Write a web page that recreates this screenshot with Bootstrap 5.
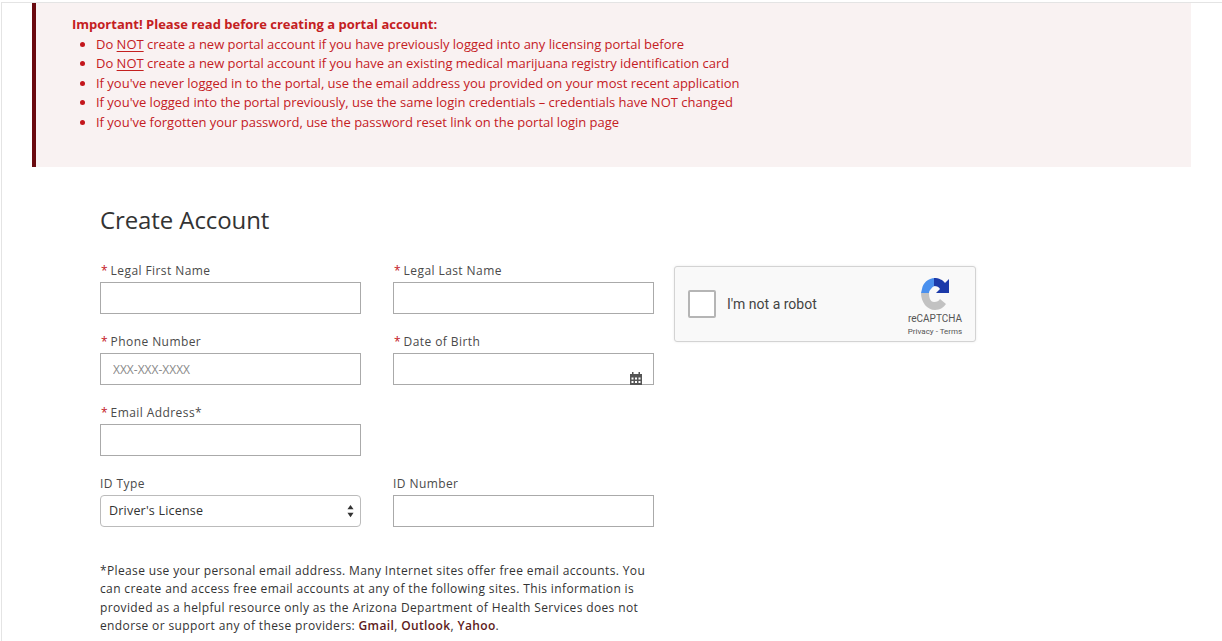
<!DOCTYPE html>
<html lang="en">
<head>
<meta charset="utf-8">
<title>Create Account</title>
<link href="https://cdn.jsdelivr.net/npm/bootstrap@5.3.0/dist/css/bootstrap.min.css" rel="stylesheet">
<style>
html,body{height:641px;overflow:hidden;background:#fff}
body{font-family:"Open Sans","Liberation Sans",sans-serif;font-size:13px;color:#333}
.page-frame{border-left:1px solid #e4e4e4;border-top:1px solid #e4e4e4;margin:2px 0 0 1px;height:639px;padding:0 30px}
.notice{background:#f9f2f2;border-left:4px solid #6a0a0f;color:#c4201f;height:164px;padding:12px 36px 0;width:1159px;line-height:19.6px;font-size:13px}
.notice ul{margin:0;padding-left:24px;letter-spacing:-.01px}
.notice li::marker{color:#c4161c}
.notice strong{font-weight:700}
.notice u{text-underline-offset:2px}
.form-area{padding:37px 0 0 68px}
.form-title{font-size:24px;font-weight:400;color:#333;line-height:32px;margin:0 0 27px;letter-spacing:-.1px}
.fields{display:grid;grid-template-columns:261px 261px 302px;column-gap:32px;row-gap:20px;width:900px}
.cap-cell{grid-column:3;grid-row:1 / span 2;margin-left:-12px;margin-top:3px}
.col-start{grid-column:1}
.lbl{display:block;font-size:12px;line-height:16px;margin-bottom:3px;color:#4a4a4a;letter-spacing:.42px;height:16px}
.req{color:#c4161c;margin:0 3px 0 1px;letter-spacing:0}
.fld{height:32px;border:1px solid #aaa;border-radius:0;padding:1px 12px 0;font-size:12px;color:#333;box-shadow:none}
.fld::placeholder{color:#8a8a8a;opacity:1}
.date-wrap{position:relative}
.cal-ico{position:absolute;right:12px;bottom:0;width:12px;height:13px}
.sel-wrap{position:relative}
.id-select{height:32px;border:1px solid #bbb;border-radius:4px;padding:0 8px;font-size:12.5px;letter-spacing:.2px;color:#333;background-image:none;box-shadow:none;appearance:none}
.sel-arrows{position:absolute;right:7px;top:8px;width:7px;height:16px}
.captcha{width:302px;height:76px;background:#f9f9f9;border:1px solid #d3d3d3;border-radius:3px;box-shadow:0 0 3px rgba(0,0,0,.08);padding:0 11px 0 13px}
.cap-box{width:28px;height:28px;border:2px solid #b5b5b5;border-radius:2px;background:#fff;margin-right:11px}
.cap-text{font-family:Roboto,"Liberation Sans",sans-serif;font-size:14px;color:#444}
.cap-brand{font-family:Roboto,"Liberation Sans",sans-serif;width:58px;text-align:center;color:#555;padding-top:10px}
.cap-brand svg{display:block;margin:0 auto 2px;width:32px;height:34px}
.cap-name{font-size:10px;line-height:12px;white-space:nowrap}
.cap-links{font-size:8px;line-height:13px;white-space:nowrap}
.fine{width:556px;margin-top:35px;font-size:12px;line-height:18.4px;color:#333;letter-spacing:.37px}
.fine a{color:#5d1a20;font-weight:600;text-decoration:none}
</style>
</head>
<body>
<div class="page-frame">
  <div class="notice">
    <strong>Important! Please read before creating a portal account:</strong>
    <ul>
      <li>Do <u>NOT</u> create a new portal account if you have previously logged into any licensing portal before</li>
      <li>Do <u>NOT</u> create a new portal account if you have an existing medical marijuana registry identification card</li>
      <li>If you've never logged in to the portal, use the email address you provided on your most recent application</li>
      <li>If you've logged into the portal previously, use the same login credentials – credentials have NOT changed</li>
      <li>If you've forgotten your password, use the password reset link on the portal login page</li>
    </ul>
  </div>
  <div class="form-area">
    <h1 class="form-title">Create Account</h1>
    <div class="fields">
      <div><label class="lbl"><span class="req">*</span>Legal First Name</label><input class="form-control fld" type="text"></div>
      <div><label class="lbl"><span class="req">*</span>Legal Last Name</label><input class="form-control fld" type="text"></div>
      <div class="cap-cell">
        <div class="captcha d-flex align-items-center">
          <div class="cap-box"></div>
          <div class="cap-text flex-grow-1">I'm not a robot</div>
          <div class="cap-brand align-self-start">
            <svg viewBox="0 0 32 34"><path fill="#4a90ee" d="M16 1C9 1 4 6 3 12L2 16h8c0-2 1-3 2-4 1-2 3-3 4-3z"/><path fill="#1c3aa9" d="M15 1c5 0 9 2 11 5l4-4v14H17l4-4c-1-2-3-3-6-3z"/><path fill="#c2c2c2" d="M2 16c0 9 6 17 14 17 5 0 9-3 11-6l-6-5c-1 2-3 3-6 3-3 0-5-3-5-9z"/></svg>
            <div class="cap-name">reCAPTCHA</div>
            <div class="cap-links">Privacy - Terms</div>
          </div>
        </div>
      </div>
      <div><label class="lbl"><span class="req">*</span>Phone Number</label><input class="form-control fld" type="text" placeholder="XXX-XXX-XXXX"></div>
      <div><label class="lbl"><span class="req">*</span>Date of Birth</label>
        <div class="date-wrap"><input class="form-control fld" type="text">
          <svg class="cal-ico" viewBox="0 0 12 13"><rect x="2" y="0" width="1.500" height="3" fill="#555"/><rect x="8.500" y="0" width="1.500" height="3" fill="#555"/><path fill="#555" d="M0 2h12v11H0z"/><path fill="#fff" d="M1.500 5.500h2v2h-2zM5 5.500h2v2H5zM8.500 5.500h2v2h-2zM1.500 9h2v2h-2zM5 9h2v2H5zM8.500 9h2v2h-2z"/></svg>
        </div>
      </div>
      <div class="col-start"><label class="lbl"><span class="req">*</span>Email Address*</label><input class="form-control fld" type="text"></div>
      <div class="col-start"><label class="lbl">ID Type</label>
        <div class="sel-wrap"><select class="form-select id-select"><option>Driver's License</option></select>
          <svg class="sel-arrows" viewBox="0 0 8 18"><path fill="#333" d="M4 2l3.500 5h-7zM4 16L.5 11h7z"/></svg>
        </div>
      </div>
      <div><label class="lbl">ID Number</label><input class="form-control fld" type="text"></div>
    </div>
    <p class="fine">*Please use your personal email address. Many Internet sites offer free email accounts. You can create and access free email accounts at any of the following sites. This information is provided as a helpful resource only as the Arizona Department of Health Services does not endorse or support any of these providers: <a href="#">Gmail</a>, <a href="#">Outlook</a>, <a href="#">Yahoo</a>.</p>
  </div>
</div>
<script src="https://cdn.jsdelivr.net/npm/bootstrap@5.3.0/dist/js/bootstrap.bundle.min.js"></script>
</body>
</html>
